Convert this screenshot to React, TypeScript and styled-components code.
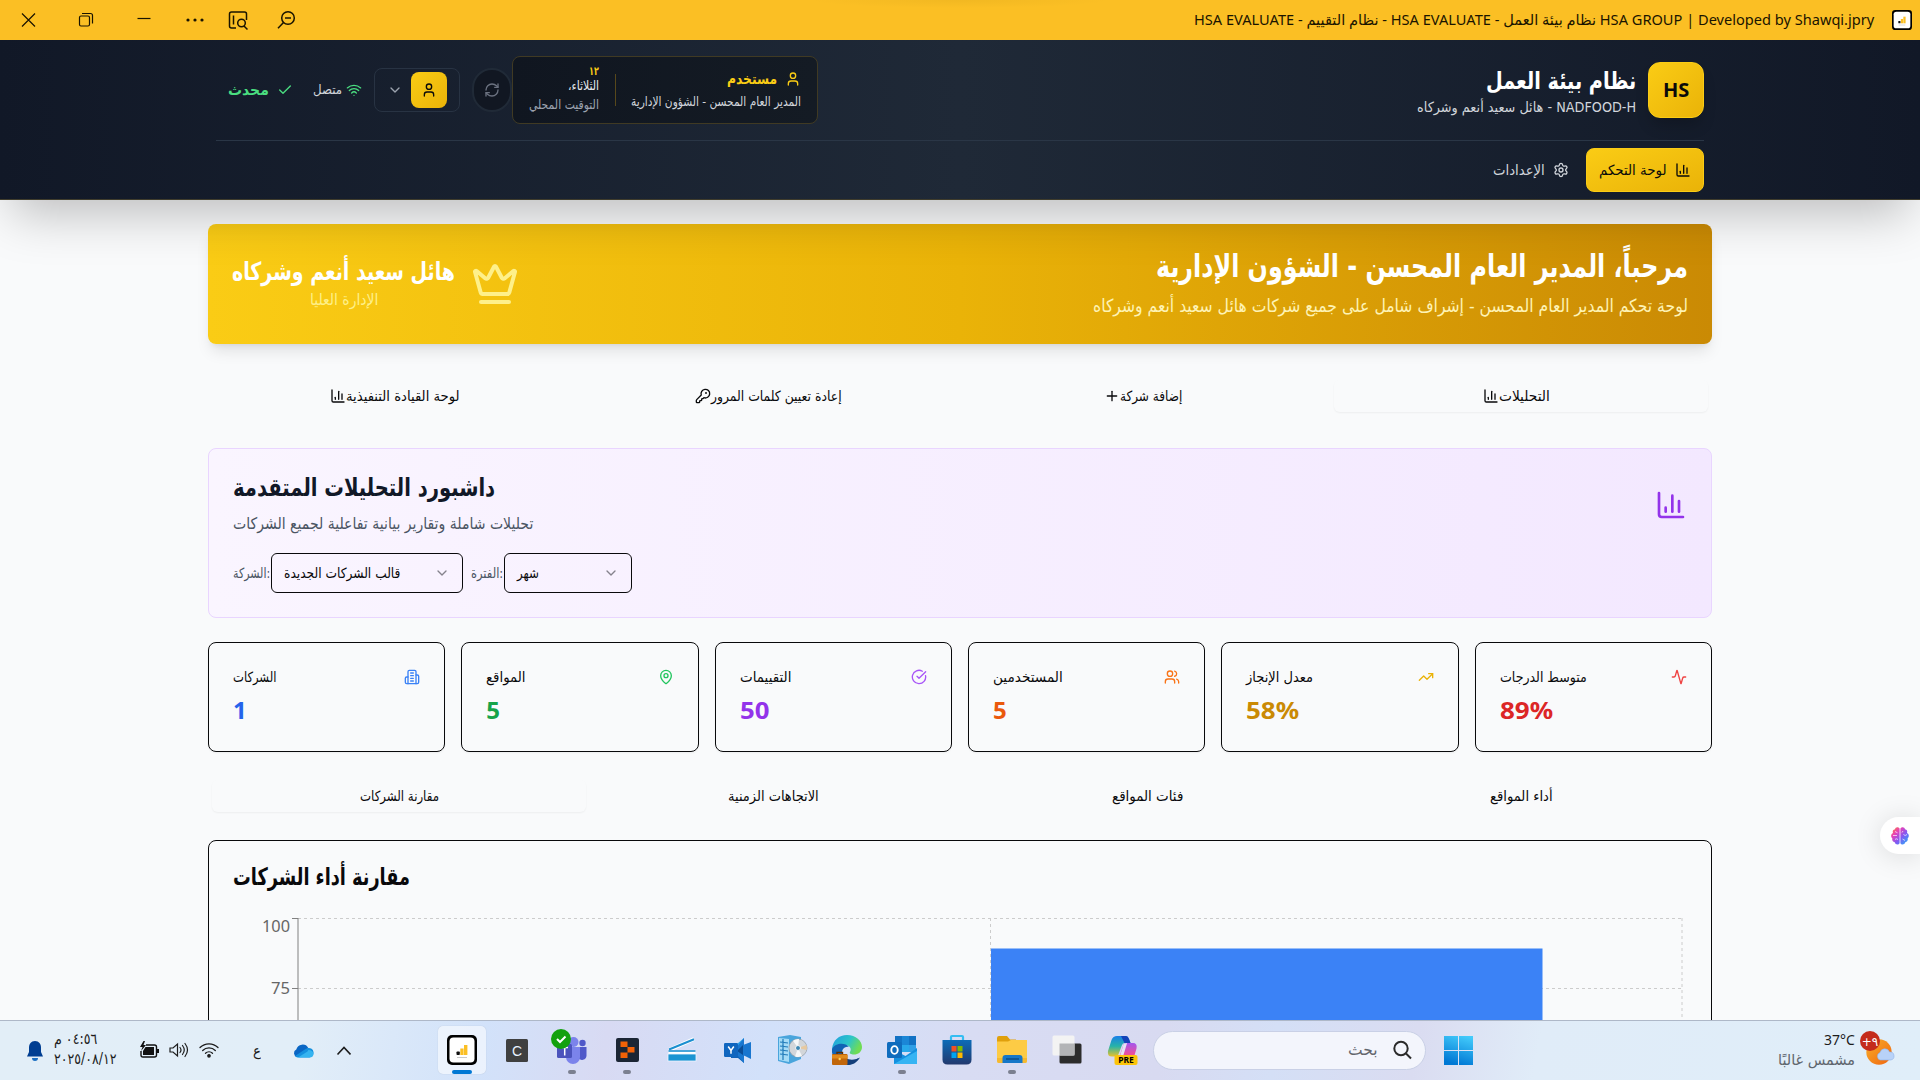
import React, { useLayoutEffect, useRef, useState } from "react";
import styled, { createGlobalStyle, css } from "styled-components";
import {
  Activity,
  ChartColumn,
  Check,
  ChevronDown,
  CircleCheckBig,
  Crown,
  KeyRound,
  MapPin,
  Plus,
  RefreshCw,
  Settings,
  TrendingUp,
  User,
  Users,
  Wifi,
} from "lucide-react";

const arabic = '"DejaVu Sans", "Noto Sans", sans-serif';
const latin = '"Noto Sans", "DejaVu Sans", sans-serif';

const Global = createGlobalStyle`
  * { box-sizing: border-box; }
  html, body { margin: 0; padding: 0; overflow: hidden; }
  body { font-family: ${arabic}; color: #09090b; background: #f9fafb; }
  svg { display: block; flex: none; }
`;

/* ---------- text that condenses to the width of its slot ---------- */

const Slot = styled.span<{ $w: number; $size: number; $bold?: boolean; $color?: string; $lh?: number; $latin?: boolean }>`
  display: block;
  flex: none;
  direction: ltr;
  text-align: left;
  white-space: nowrap;
  width: ${(p) => p.$w}px;
  font-family: ${(p) => (p.$latin ? latin : arabic)};
  font-size: ${(p) => p.$size}px;
  font-weight: ${(p) => (p.$bold ? 700 : 400)};
  line-height: ${(p) => p.$lh ?? Math.round(p.$size * 1.4)}px;
  height: ${(p) => p.$lh ?? Math.round(p.$size * 1.4)}px;
  ${(p) => p.$color && css`color: ${p.$color};`}
`;

const Run = styled.span`
  display: inline-block;
  transform-origin: 0 50%;
  vertical-align: top;
`;

type TProps = {
  w: number;
  size: number;
  children: string;
  bold?: boolean;
  color?: string;
  lh?: number;
  latin?: boolean;
  dir?: "rtl" | "ltr";
};

function T({ w, size, children, bold, color, lh, latin: isLatin, dir = "rtl" }: TProps) {
  const ref = useRef<HTMLSpanElement>(null);
  const [scale, setScale] = useState(1);
  useLayoutEffect(() => {
    if (ref.current) setScale(w / ref.current.offsetWidth);
  }, [w, size, children]);
  return (
    <Slot $w={w} $size={size} $bold={bold} $color={color} $lh={lh} $latin={isLatin}>
      <Run ref={ref} dir={dir} style={{ transform: `scaleX(${scale})` }}>
        {children}
      </Run>
    </Slot>
  );
}

/* ---------- window ---------- */

const Screen = styled.div`
  width: 1920px;
  height: 1080px;
  display: grid;
  grid-template-rows: 40px 980px 60px;
  overflow: hidden;
`;

const TitleBar = styled.div`
  display: flex;
  justify-content: space-between;
  align-items: center;
  padding: 0 8px 0 21px;
  background: radial-gradient(ellipse 150px 8px at 960px 0, rgba(120, 90, 0, 0.07), transparent) #fbbf24;
`;

const TitleGroup = styled.div`
  display: flex;
  align-items: center;
  gap: 18px;
`;

const TitleText = styled.div`
  padding-bottom: 2px;
`;

function WindowControls() {
  return (
    <svg width="280" height="24" viewBox="21 8 280 24" fill="none" stroke="#1a1400" strokeWidth="1.2">
      <path d="M22 13.500l13 13M35 13.500l-13 13" />
      <rect x="79.500" y="16" width="10" height="10" rx="1.500" />
      <path d="M82 13.500h8.500q2 0 2 2v8" />
      <path d="M137.500 18.500h13" />
      <g fill="#1a1400" stroke="none">
        <circle cx="188" cy="20" r="1.600" />
        <circle cx="195" cy="20" r="1.600" />
        <circle cx="202" cy="20" r="1.600" />
      </g>
      <path d="M236 28h-4.500q-2 0-2-2V14q0-2 2-2h13q2 0 2 2v6M233.500 15.500v9" strokeWidth="1.500" />
      <circle cx="241.500" cy="23" r="3.800" strokeWidth="1.500" />
      <path d="M244 26l3.500 3.500" strokeWidth="1.500" />
      <circle cx="288" cy="18" r="6.300" strokeWidth="1.500" />
      <path d="M283.500 22.500l-5.500 5.800M285 18h6" strokeWidth="1.500" />
    </svg>
  );
}

function EvaluateMark({ size }: { size: number }) {
  return (
    <svg width={size} height={size} viewBox="0 0 30 30">
      <rect width="30" height="30" rx="5" fill="#000" />
      <rect x="2.500" y="2.500" width="25" height="25" rx="4" fill="#fff" />
      <rect x="9.500" y="16.500" width="3.300" height="3.500" rx=".8" fill="#111" />
      <rect x="13.300" y="13.500" width="3.300" height="6.500" fill="#fbbf24" />
      <rect x="17" y="10" width="3.400" height="10" fill="#fbbf24" />
      <path d="M10 22.500h10" stroke="#bbb" strokeWidth=".8" />
    </svg>
  );
}

/* ---------- app ---------- */

const Viewport = styled.div`
  overflow: hidden;
  background: #f9fafb;
  display: flex;
  flex-direction: column;
`;

const Header = styled.header`
  position: relative;
  z-index: 2;
  flex: none;
  height: 160px;
  padding: 0 216px;
  background: linear-gradient(to right, #111827, #1f2937 50%, #111827);
  border-bottom: 1px solid #3f3c2c;
  box-shadow: 0 25px 50px -12px rgba(0, 0, 0, 0.25);
`;

const TopRow = styled.div`
  height: 101px;
  display: flex;
  align-items: center;
  justify-content: space-between;
  border-bottom: 1px solid #2a3646;
`;

const Cluster = styled.div<{ $gap?: number }>`
  display: flex;
  align-items: center;
  gap: ${(p) => p.$gap ?? 0}px;
`;

const StatusBar = styled(Cluster)`
  padding-left: 12px;
`;

const SyncIcon = styled.div`
  padding: 0 20px 0 8px;
`;

const MenuButton = styled.div`
  width: 86px;
  height: 44px;
  margin: 0 12px;
  padding: 0 12px;
  display: flex;
  align-items: center;
  justify-content: space-between;
  border: 1px solid #283343;
  border-radius: 8px;
  color: #9ca3af;
`;

const goldFill = css`
  background: linear-gradient(to bottom right, #facc15, #eab308);
  color: #0a0a0a;
`;

const Avatar = styled.div`
  ${goldFill}
  width: 36px;
  height: 36px;
  border-radius: 8px;
  display: grid;
  place-items: center;
`;

const Refresh = styled.div`
  width: 40px;
  height: 44px;
  border: 2px solid #202a37;
  border-radius: 20px;
  background: #111722;
  color: #6b7280;
  display: grid;
  place-items: center;
`;

const UserCard = styled.div`
  width: 306px;
  height: 68px;
  display: flex;
  align-items: center;
  padding: 0 16px;
  border: 1px solid #403a23;
  border-radius: 8px;
  background: linear-gradient(to right, #101620, #141b24);
`;

const DateColumn = styled.div`
  display: flex;
  flex-direction: column;
  align-items: flex-end;
  height: 47px;
`;

const CardRule = styled.div`
  width: 1px;
  height: 32px;
  margin: 0 15px 0 16px;
  background: #57481b;
`;

const UserColumn = styled.div`
  display: flex;
  flex-direction: column;
  align-items: flex-end;
  gap: 3px;
  padding-top: 1px;
  color: #facc15;
`;

const Brand = styled(Cluster)`
  gap: 12px;
`;

const BrandText = styled.div`
  display: flex;
  flex-direction: column;
  align-items: flex-end;
  padding-top: 3px;
`;

const BrandMark = styled.div`
  ${goldFill}
  width: 56px;
  height: 56px;
  border-radius: 12px;
  display: grid;
  place-items: center;
  border: 1px solid #facc15;
  box-shadow: 0 10px 15px -3px rgba(0, 0, 0, 0.2);
`;

const NavRow = styled.nav`
  height: 58px;
  display: flex;
  align-items: center;
  justify-content: flex-end;
  gap: 17px;
  color: #d1d5db;
`;

const NavItem = styled.div<{ $active?: boolean }>`
  height: 44px;
  display: flex;
  align-items: center;
  gap: 8px;
  ${(p) =>
    p.$active &&
    css`
      ${goldFill}
      width: 118px;
      padding-left: 12px;
      border: 1px solid #facc15;
      border-radius: 8px;
    `}
`;

const Main = styled.main`
  width: 1504px;
  margin: 0 auto;
  padding-top: 24px;
`;

const Banner = styled.section`
  height: 120px;
  padding: 0 24px;
  display: flex;
  justify-content: space-between;
  align-items: center;
  border-radius: 8px;
  background: linear-gradient(to left, #ca8a04, #eab308 50%, #facc15);
  box-shadow: 0 10px 15px -3px rgba(0, 0, 0, 0.1), 0 4px 6px -4px rgba(0, 0, 0, 0.1);
  color: #fff;
`;

const BannerColumn = styled.div<{ $end?: boolean }>`
  display: flex;
  flex-direction: column;
  align-items: ${(p) => (p.$end ? "flex-end" : "center")};
  padding-top: ${(p) => (p.$end ? 4 : 0)}px;
`;

const TabBar = styled.div<{ $top: number; $bottom: number }>`
  height: 40px;
  margin: ${(p) => p.$top}px 0 ${(p) => p.$bottom}px;
  padding: 4px;
  display: grid;
  grid-template-columns: repeat(4, 1fr);
`;

const Tab = styled.div<{ $active?: boolean; $icon?: boolean }>`
  display: flex;
  align-items: center;
  justify-content: center;
  padding-right: ${(p) => (p.$icon ? 9 : 0)}px;
  border-radius: 6px;
  box-shadow: ${(p) => (p.$active ? "0 1px 2px rgba(0,0,0,.05)" : "none")};
`;

const Panel = styled.section`
  height: 170px;
  padding: 21px 24px;
  display: flex;
  justify-content: space-between;
  border: 1px solid #e9d5ff;
  border-radius: 8px;
  background: linear-gradient(to right, #faf5ff, #f3e8ff);
`;

const PanelBody = styled.div`
  display: flex;
  flex-direction: column;
`;

const PanelIcon = styled.div`
  padding-top: 19px;
  color: #9333ea;
`;

const Filters = styled.div`
  display: flex;
  align-items: center;
  margin-top: 11px;
`;

const Select = styled.div<{ $w: number }>`
  width: ${(p) => p.$w}px;
  height: 40px;
  margin: 0 8px 0 1px;
  padding: 0 12px;
  display: flex;
  align-items: center;
  justify-content: space-between;
  border: 1px solid #09090b;
  border-radius: 6px;
  svg { color: #85828c; }
`;

const Stats = styled.section`
  margin-top: 24px;
  display: grid;
  grid-template-columns: repeat(6, 1fr);
  gap: 16px;
`;

const StatCard = styled.div`
  height: 110px;
  padding: 23px 24px 0;
  border: 1px solid #09090b;
  border-radius: 8px;
  box-shadow: 0 1px 2px rgba(0, 0, 0, 0.05);
`;

const StatHead = styled.div<{ $icon: string }>`
  display: flex;
  align-items: center;
  justify-content: space-between;
  height: 22px;
  margin-bottom: 6px;
  svg { color: ${(p) => p.$icon}; }
`;

const ChartCard = styled.section`
  height: 260px;
  border: 1px solid #09090b;
  border-radius: 8px;
`;

const ChartHead = styled.div`
  height: 54px;
  padding: 20px 24px 0;
`;

const Assistant = styled.div`
  position: absolute;
  right: 0;
  top: 817px;
  z-index: 3;
  width: 40px;
  height: 37px;
  padding-left: 10px;
  display: flex;
  align-items: center;
  border-radius: 19px 0 0 19px;
  background: #fff;
  box-shadow: 0 2px 28px rgba(0, 0, 0, 0.13);
`;

function Building({ size }: { size: number }) {
  return (
    <svg width={size} height={size} viewBox="0 0 24 24" fill="none" stroke="currentColor" strokeWidth="2" strokeLinecap="round" strokeLinejoin="round">
      <path d="M6 22V4a2 2 0 0 1 2-2h8a2 2 0 0 1 2 2v18Z" />
      <path d="M6 12H4a2 2 0 0 0-2 2v6a2 2 0 0 0 2 2h2" />
      <path d="M18 9h2a2 2 0 0 1 2 2v9a2 2 0 0 1-2 2h-2" />
      <path d="M10 6h4M10 10h4M10 14h4M10 18h4" />
    </svg>
  );
}

const stats = [
  { label: "الشركات", w: 43, value: "1", vw: 14, icon: Building, tint: "#3b82f6", color: "#2563eb" },
  { label: "المواقع", w: 40, value: "5", vw: 14, icon: MapPin, tint: "#22c55e", color: "#16a34a" },
  { label: "التقييمات", w: 51, value: "50", vw: 29, icon: CircleCheckBig, tint: "#a855f7", color: "#9333ea" },
  { label: "المستخدمين", w: 70, value: "5", vw: 14, icon: Users, tint: "#f97316", color: "#ea580c" },
  { label: "معدل الإنجاز", w: 67, value: "58%", vw: 53, icon: TrendingUp, tint: "#eab308", color: "#ca8a04" },
  { label: "متوسط الدرجات", w: 87, value: "89%", vw: 53, icon: Activity, tint: "#ef4444", color: "#dc2626" },
];

const sections = [
  { label: "لوحة القيادة التنفيذية", w: 114, icon: ChartColumn },
  { label: "إعادة تعيين كلمات المرور", w: 131, icon: KeyRound },
  { label: "إضافة شركة", w: 62, icon: Plus },
  { label: "التحليلات", w: 51, icon: ChartColumn },
];

const views = [
  { label: "مقارنة الشركات", w: 79 },
  { label: "الاتجاهات الزمنية", w: 91 },
  { label: "فئات المواقع", w: 71 },
  { label: "أداء المواقع", w: 63 },
];

function AppHeader() {
  return (
    <Header>
      <TopRow>
        <StatusBar>
          <T w={41} size={15} bold color="#4ade80">محدث</T>
          <SyncIcon>
            <Check size={16} color="#4ade80" />
          </SyncIcon>
          <Cluster $gap={4}>
            <T w={29} size={13} color="#d1d5db">متصل</T>
            <Wifi size={16} color="#4ade80" />
          </Cluster>
          <MenuButton>
            <ChevronDown size={16} />
            <Avatar>
              <User size={16} />
            </Avatar>
          </MenuButton>
          <Refresh>
            <RefreshCw size={16} />
          </Refresh>
          <UserCard>
            <DateColumn>
              <T w={10} size={12} bold lh={8} color="#facc15">١٢</T>
              <T w={31} size={13} lh={22} color="#e5e7eb">الثلاثاء،</T>
              <T w={70} size={13} lh={16} color="#9ca3af">التوقيت المحلي</T>
            </DateColumn>
            <CardRule />
            <UserColumn>
              <Cluster $gap={8}>
                <T w={50} size={15} lh={20} bold>مستخدم</T>
                <User size={16} />
              </Cluster>
              <T w={170} size={13} lh={20} color="#d1d5db">المدير العام المحسن - الشؤون الإدارية</T>
            </UserColumn>
          </UserCard>
        </StatusBar>
        <Brand>
          <BrandText>
            <T w={150} size={24} lh={30} bold color="#fff">نظام بيئة العمل</T>
            <T w={219} size={14} lh={22} color="#d1d5db">NADFOOD-H - هائل سعيد أنعم وشركاه</T>
          </BrandText>
          <BrandMark>
            <T w={26} size={20} bold latin dir="ltr">HS</T>
          </BrandMark>
        </Brand>
      </TopRow>
      <NavRow>
        <NavItem>
          <T w={52} size={14}>الإعدادات</T>
          <Settings size={16} />
        </NavItem>
        <NavItem $active>
          <T w={68} size={14}>لوحة التحكم</T>
          <ChartColumn size={16} />
        </NavItem>
      </NavRow>
    </Header>
  );
}

function ComparisonChart() {
  return (
    <svg width="1502" height="180" viewBox="0 0 1502 180">
      <path d="M89 23.500H1473M89 93.500H1473M781.500 23V180M1473 23V180" fill="none" stroke="#ccc" strokeDasharray="3 3" />
      <rect x="782" y="53.500" width="551.500" height="140" fill="#3b82f6" />
      <path d="M89 23V180M83 23.500h6M83 93.500h6" stroke="#808080" fill="none" />
      <g fill="#666" fontFamily={latin} fontSize="16" textAnchor="end">
        <text x="81" y="36.500" textLength="28" lengthAdjust="spacingAndGlyphs">100</text>
        <text x="81" y="99" textLength="19" lengthAdjust="spacingAndGlyphs">75</text>
      </g>
    </svg>
  );
}

function BrainIcon() {
  return (
    <svg width="20" height="20" viewBox="0 0 20 20">
      <defs>
        <linearGradient id="brain" x1="0" y1="0" x2="1" y2="1">
          <stop offset="0" stopColor="#ff8a1f" />
          <stop offset=".3" stopColor="#e83fb8" />
          <stop offset=".6" stopColor="#7c5cf5" />
          <stop offset="1" stopColor="#22b8f5" />
        </linearGradient>
      </defs>
      <path
        d="M9.600 2.500C8 .3 5.200 1.200 5 3.300 3 3.500 2.300 5.500 3 7 .8 7.800.6 11 2.300 12.300 1.800 14.500 3 16 4.700 16.300 5.500 19 8.500 19.200 9.600 17.300zM10.400 2.500C12 .3 14.800 1.200 15 3.300 17 3.500 17.700 5.500 17 7c2.200.8 2.400 4 .7 5.300.5 2.200-.7 3.700-2.400 4-.8 2.700-3.800 2.900-4.900 1z"
        fill="url(#brain)"
      />
      <path d="M3 9.500h4M5 5.500l2.500 1.300M5 13.500q1-1.500 3 0M17 8.500q-2 2-3.500 0M13 5l-1 1.500M12.500 13l2.500 1.500" stroke="#fff" strokeOpacity=".75" strokeWidth=".9" fill="none" />
    </svg>
  );
}

function Dashboard() {
  return (
    <Main>
      <Banner>
        <Cluster $gap={16}>
          <BannerColumn>
            <T w={223} size={25} lh={32} bold>هائل سعيد أنعم وشركاه</T>
            <T w={68} size={16} lh={24} color="#fef08a">الإدارة العليا</T>
          </BannerColumn>
          <Crown size={48} color="#fef08a" />
        </Cluster>
        <BannerColumn $end>
          <T w={532} size={31} lh={40} bold>مرحباً، المدير العام المحسن - الشؤون الإدارية</T>
          <T w={595} size={18} lh={40} color="#fef3b5">لوحة تحكم المدير العام المحسن - إشراف شامل على جميع شركات هائل سعيد أنعم وشركاه</T>
        </BannerColumn>
      </Banner>

      <TabBar $top={32} $bottom={32}>
        {sections.map(({ label, w, icon: Icon }, i) => (
          <Tab key={label} $icon $active={i === 3}>
            <Icon size={16} />
            <T w={w} size={14}>{label}</T>
          </Tab>
        ))}
      </TabBar>

      <Panel>
        <PanelBody>
          <T w={262} size={25} lh={36} bold color="#111827">داشبورد التحليلات المتقدمة</T>
          <T w={300} size={16} lh={36} color="#4b5563">تحليلات شاملة وتقارير بيانية تفاعلية لجميع الشركات</T>
          <Filters>
            <T w={37} size={14} color="#4b5563" dir="ltr">الشركة:</T>
            <Select $w={192}>
              <T w={116} size={14}>قالب الشركات الجديدة</T>
              <ChevronDown size={16} />
            </Select>
            <T w={32} size={14} color="#4b5563" dir="ltr">الفترة:</T>
            <Select $w={128}>
              <T w={22} size={14}>شهر</T>
              <ChevronDown size={16} />
            </Select>
          </Filters>
        </PanelBody>
        <PanelIcon>
          <ChartColumn size={32} />
        </PanelIcon>
      </Panel>

      <Stats>
        {stats.map(({ label, w, value, vw, icon: Icon, tint, color }) => (
          <StatCard key={label}>
            <StatHead $icon={tint}>
              <T w={w} size={14}>{label}</T>
              <Icon size={16} />
            </StatHead>
            <T w={vw} size={24} lh={32} bold latin dir="ltr" color={color}>{value}</T>
          </StatCard>
        ))}
      </Stats>

      <TabBar $top={24} $bottom={24}>
        {views.map(({ label, w }, i) => (
          <Tab key={label} $active={i === 0}>
            <T w={w} size={14}>{label}</T>
          </Tab>
        ))}
      </TabBar>

      <ChartCard>
        <ChartHead>
          <T w={177} size={24} lh={32} bold>مقارنة أداء الشركات</T>
        </ChartHead>
        <ComparisonChart />
      </ChartCard>
    </Main>
  );
}

/* ---------- taskbar ---------- */

const Taskbar = styled.footer`
  position: relative;
  z-index: 4;
  display: grid;
  grid-template-columns: 434px 715px 1fr auto;
  align-items: center;
  border-top: 1px solid #aeb8c8;
  background: linear-gradient(100deg, #e2eef7 0, #e2eef8 300px, #d2e2fa 480px, #d8daf3 600px, #d2e1fa 760px, #d8dcf3 960px, #d8daf1 1150px, #d4dff6 1260px, #dadcf1 1400px, #e0ecf8 1520px, #e0eef9 100%);
`;

const Tray = styled.div`
  display: flex;
  align-items: center;
  padding-left: 26px;
`;

const Clock = styled.div`
  display: flex;
  flex-direction: column;
  margin: 0 22px 0 10px;
  padding-bottom: 2px;
`;

const TrayIcons = styled.div`
  display: flex;
  gap: 10px;
  padding-bottom: 2px;
`;

const Letter = styled.div`
  margin: 0 32px 0 34px;
`;

const Apps = styled.div`
  display: flex;
`;

const AppSlot = styled.div<{ $active?: boolean }>`
  width: 55px;
  height: 59px;
  padding: 5px 3.5px 6px;
  > div {
    height: 48px;
    border-radius: 5px;
    display: flex;
    flex-direction: column;
    align-items: center;
    justify-content: space-between;
    padding-top: 8px;
    ${(p) => p.$active && css`background: rgba(255, 255, 255, 0.55); box-shadow: 0 0 1px rgba(0, 0, 0, 0.2);`}
  }
`;

const Indicator = styled.i<{ $kind: "none" | "dot" | "bar" }>`
  display: block;
  height: 4px;
  border-radius: 2px;
  width: ${(p) => (p.$kind === "bar" ? 20 : 8)}px;
  background: ${(p) => (p.$kind === "bar" ? "#0078d4" : p.$kind === "dot" ? "#7b8090" : "transparent")};
`;

const SearchGroup = styled.div`
  display: flex;
  align-items: center;
  gap: 18px;
  padding: 0 0 1px 4px;
`;

const SearchBox = styled.div`
  width: 273px;
  height: 39px;
  display: flex;
  align-items: center;
  justify-content: flex-end;
  gap: 14px;
  padding-right: 13px;
  border: 1px solid #c9d0e6;
  border-radius: 20px;
  background: #f3f5fc;
`;

const Weather = styled.div`
  display: flex;
  align-items: center;
  gap: 5px;
  padding: 0 24px 2px 0;
`;

const WeatherText = styled.div`
  display: flex;
  flex-direction: column;
  align-items: flex-end;
`;

const glyph = { width: 32, height: 32, viewBox: "0 0 32 32" };

const apps: { id: string; mark: React.ReactNode; state: "none" | "dot" | "bar" }[] = [
  { id: "evaluate", state: "bar", mark: <svg {...glyph}><svg x="1" y="1"><EvaluateMark size={30} /></svg></svg> },
  {
    id: "console",
    state: "none",
    mark: (
      <svg {...glyph}>
        <rect x="5" y="5" width="22" height="23" rx="1.500" fill="#3f4040" />
        <text x="16" y="21.500" fontSize="14" fill="#e8f2ff" textAnchor="middle" fontFamily="Liberation Sans">C</text>
      </svg>
    ),
  },
  {
    id: "teams",
    state: "dot",
    mark: (
      <svg {...glyph} overflow="visible">
        <circle cx="26.500" cy="9" r="3.200" fill="#5059c9" />
        <circle cx="17.500" cy="8" r="5" fill="#7b83eb" />
        <path d="M22 13h8.500v8.500a4.500 4.500 0 0 1-8.500 2z" fill="#5059c9" />
        <path d="M10 13h14v10a7 7 0 0 1-14 0z" fill="#7b83eb" />
        <rect x="1" y="10" width="15" height="14" rx="1.500" fill="#4b53bc" />
        <path d="M5.500 13.500h6.500M8.700 13.500v8" stroke="#fff" strokeWidth="1.500" />
        <circle cx="5" cy="5" r="10" fill="#13a10e" />
        <path d="M1 5l3 3 5.500-5.500" fill="none" stroke="#fff" strokeWidth="2" />
      </svg>
    ),
  },
  {
    id: "replit",
    state: "dot",
    mark: (
      <svg {...glyph}>
        <rect x="5" y="4" width="23" height="24" rx="2" fill="#1b2534" />
        <path d="M9.500 7.500h7V13h-7zM16.500 13h7v5.500h-7zM9.500 18.500h7V24h-7z" fill="#f26207" />
      </svg>
    ),
  },
  {
    id: "scanner",
    state: "none",
    mark: (
      <svg {...glyph}>
        <path d="M3 16L28 5M2.500 18h27" stroke="#fff" strokeWidth="4" />
        <path d="M3 15.500L28 5.300" stroke="#1b8fd0" strokeWidth="2" />
        <path d="M2.500 17h27" stroke="#1b8fd0" strokeWidth="1.600" />
        <rect x="2" y="20" width="28" height="7" fill="#1b94d2" stroke="#eef6ff" strokeWidth=".8" />
      </svg>
    ),
  },
  {
    id: "yammer",
    state: "none",
    mark: (
      <svg {...glyph}>
        <path d="M9 10h7l7-6v11z" fill="#2ba3ea" />
        <path d="M10 15h13v14l-6-5h-7z" fill="#0f62b8" />
        <path d="M15 14l8-10v25l-7-8zM22 11l8-3v17l-8-4z" fill="#1976cf" />
        <path d="M16 17l6-6v10z" fill="#0a4c96" />
        <rect x="3" y="9" width="14" height="14" rx="1.200" fill="#1066bf" />
        <path d="M7.200 12.500l2.800 4 2.800-4M10 16.500v3.300" stroke="#fff" strokeWidth="1.500" fill="none" />
      </svg>
    ),
  },
  {
    id: "installer",
    state: "none",
    mark: (
      <svg {...glyph}>
        <path d="M2 3l12-2 11 2v22l-12 5-11-3z" fill="#4aa5dc" />
        <path d="M3 4l10 1v23l-10-2z" fill="#a5dbf6" />
        <path d="M4 8l8 1M4 12l8 1M4 16l8 1M4 20l8 1M7 5v21" stroke="#1f79b8" strokeWidth="1.200" />
        <circle cx="22" cy="14" r="9" fill="#d2d6da" stroke="#9ba3ab" strokeWidth=".8" />
        <path d="M22 14l-5-7.300a9 9 0 0 1 6-1.600zM22 14l4 8a9 9 0 0 1-7 .4z" fill="#f6f8f9" />
        <path d="M22 14l8.500-3a9 9 0 0 1 .2 5z" fill="#e7c9a0" />
        <circle cx="22" cy="14" r="2.500" fill="#3c87b4" stroke="#f5f5f5" />
      </svg>
    ),
  },
  {
    id: "edge",
    state: "none",
    mark: (
      <svg {...glyph}>
        <defs>
          <linearGradient id="edgeTop" x1="0" y1="0" x2="1" y2=".4">
            <stop offset="0" stopColor="#1f9de0" />
            <stop offset=".6" stopColor="#2cc5c9" />
            <stop offset="1" stopColor="#6fdc55" />
          </linearGradient>
        </defs>
        <path d="M1 15C2 6 8 1 16 1c9 0 15 6 15 12 0 5-4 7.500-8 7.500-3 0-5-1-4-2.500 2-3 0-7-5-7-6 0-9 2-13 4z" fill="url(#edgeTop)" />
        <path d="M1 15c3-6 13-7 17-2-5-1-8 3-6.500 8 1.500 5 8 8 16 3-3 4.500-7 7-12 7C7 31 0 24 1 15z" fill="#1163b4" />
        <path d="M11.500 20c2 5 9 8 17.500 3.500-3 5-7 7.500-13 7.500z" fill="#143f7a" />
        <rect x="1" y="20" width="15.500" height="11" rx="1" fill="#c1660a" />
        <path d="M1 21h15.500v3.500H1z" fill="#e08a1b" />
        <path d="M6 20v-1.500h5.500V20" stroke="#5a2e05" strokeWidth="1.400" fill="none" />
        <circle cx="8.700" cy="25" r="1.200" fill="#ffd25c" />
      </svg>
    ),
  },
  {
    id: "outlook",
    state: "dot",
    mark: (
      <svg {...glyph}>
        <path d="M9 2h21v16H9z" fill="#1066b5" />
        <path d="M9 2h7v9H9zM23 2h7v9h-7z" fill="#1272c4" />
        <path d="M16 2h7v9h-7z" fill="#1b86d6" />
        <path d="M16 11h7v7h-7z" fill="#28a8ea" />
        <path d="M23 11h7v7h-7z" fill="#2f9fe6" />
        <path d="M8 16l11.500 6L31 14v16H8z" fill="#1490df" />
        <path d="M8 30l23-13v13z" fill="#36b4f3" />
        <rect x="1" y="8" width="15" height="16" rx="1.500" fill="#0f6cbd" />
        <ellipse cx="8.500" cy="16" rx="3.200" ry="3.900" fill="none" stroke="#fff" strokeWidth="1.900" />
      </svg>
    ),
  },
  {
    id: "store",
    state: "none",
    mark: (
      <svg {...glyph}>
        <defs>
          <linearGradient id="bag" x1="0" y1="0" x2="0" y2="1">
            <stop offset="0" stopColor="#0c6cb8" />
            <stop offset="1" stopColor="#22396e" />
          </linearGradient>
        </defs>
        <path d="M10 7V3q0-1 1-1h10q1 0 1 1v4" fill="none" stroke="#34bdf2" strokeWidth="2.200" />
        <path d="M1.500 6h29v19.500q0 5-5 5h-19q-5 0-5-5z" fill="url(#bag)" />
        <path d="M10.500 12h5v5.500h-5z" fill="#f25022" />
        <path d="M16.500 12h5v5.500h-5z" fill="#7fba00" />
        <path d="M10.500 18.500h5V24h-5z" fill="#00a4ef" />
        <path d="M16.500 18.500h5V24h-5z" fill="#ffb900" />
      </svg>
    ),
  },
  {
    id: "files",
    state: "dot",
    mark: (
      <svg {...glyph}>
        <path d="M1 4q0-2 2-2h8l3 3.500h6V12H1z" fill="#e0a00c" />
        <path d="M1 7.500h11L15 6h16v21q0 2-2 2H3q-2 0-2-2z" fill="#fdcb45" />
        <path d="M1 24h30v3q0 2-2 2H3q-2 0-2-2z" fill="#f6b92f" />
        <path d="M6.500 29v-5q0-3 3-3h14q3 0 3 3v5z" fill="#1677c8" />
        <path d="M10 25h13" stroke="#0a4c8a" strokeWidth="1.500" />
      </svg>
    ),
  },
  {
    id: "taskview",
    state: "none",
    mark: (
      <svg {...glyph}>
        <rect x="8.500" y="9.500" width="22" height="20" rx="1.500" fill="#2c2c2c" />
        <rect x="1.500" y="1.500" width="22" height="20" rx="1.500" fill="#f3f3f3" />
        <path d="M8.500 9.500h15v12h-15z" fill="#b3b4b6" />
      </svg>
    ),
  },
  {
    id: "copilot",
    state: "none",
    mark: (
      <svg {...glyph}>
        <defs>
          <linearGradient id="copA" x1="0" y1="0" x2="0" y2="1">
            <stop offset="0" stopColor="#1a7fe8" />
            <stop offset=".5" stopColor="#27b3a8" />
            <stop offset="1" stopColor="#e9c22c" />
          </linearGradient>
          <linearGradient id="copB" x1="0" y1="0" x2="0" y2="1">
            <stop offset="0" stopColor="#a257ee" />
            <stop offset=".6" stopColor="#ee4f9b" />
            <stop offset="1" stopColor="#f58a52" />
          </linearGradient>
        </defs>
        <path d="M11 2h9q2 0 3 3l1.500 4h-6q-2 0-2.700 2.500L13 19q-1 3.500-4 3.500H6Q1 22.500 2 17L5.500 6Q7 2 11 2z" fill="url(#copA)" />
        <path d="M15 2h5q2 0 3 3l1.500 4h-6z" fill="#1443b8" />
        <path d="M24.500 9H27q4.500 0 3.500 5.500L28 23q-1.500 5-6 5H13q-2 0-2.500-3.500 2.500 0 3.500-3.500l3-9q.8-3 3.500-3z" fill="url(#copB)" />
        <path d="M17.300 11l-3 10h3.200l3.600-12q-3 0-3.800 2z" fill="#e6e3f5" />
        <rect x="8.500" y="21" width="23" height="10" rx="2" fill="#fcc40a" />
        <text x="20" y="29" fontSize="8.500" fontWeight="700" textAnchor="middle" fontFamily="Noto Sans">PRE</text>
      </svg>
    ),
  },
];

function TaskbarView() {
  return (
    <Taskbar>
      <Tray>
        <svg width="18" height="22" viewBox="0 0 18 22" fill="#003e92">
          <path d="M9 1c4 0 6 3 6 6.500V12l2 4.500H1L3 12V7.500C3 4 5 1 9 1z" />
          <path d="M6 18h6a3 3 0 0 1-6 0z" fill="#1b6ec2" />
        </svg>
        <Clock>
          <T w={43} size={15} lh={19} color="#1c1c1c">٠٤:٥٦ م</T>
          <T w={63} size={15} lh={20} color="#1c1c1c">٢٠٢٥/٠٨/١٢</T>
        </Clock>
        <TrayIcons>
          <svg width="20" height="20" viewBox="0 0 20 20">
            <path d="M7 5h8.500q2 0 2 2v8q0 2-2 2H4q-2 0-2-2v-4" fill="none" stroke="#111" strokeWidth="1.400" />
            <path d="M6.500 7h8.500v8H4v-4z" fill="#111" />
            <path d="M18 9h2v4h-2z" fill="#111" />
            <path d="M4.500 1L1 7h2.500L2 11l5-6H4.500L6 1z" fill="#111" />
          </svg>
          <svg width="20" height="20" viewBox="0 0 20 20" fill="none" stroke="#1c1c1c" strokeWidth="1.200" strokeLinecap="round">
            <path d="M1 8v4h3l4.500 4V4L4 8zM11 7.500q2 2.500 0 5M13.500 5.500q3.500 4.500 0 9M16 3.500q5 6.500 0 13" />
          </svg>
          <svg width="20" height="20" viewBox="0 0 20 20" fill="none" stroke="#1c1c1c" strokeWidth="1.300" strokeLinecap="round">
            <path d="M1 7.500a12.800 12.800 0 0 1 18 0M3.700 10.500a9 9 0 0 1 12.600 0M6.500 13.300a5 5 0 0 1 7 0" />
            <circle cx="10" cy="15.800" r="1.200" fill="#1c1c1c" />
          </svg>
        </TrayIcons>
        <Letter>
          <T w={8} size={15} lh={28} color="#1c1c1c">ع</T>
        </Letter>
        <svg width="21" height="14" viewBox="0 0 21 14">
          <path d="M4 13a4 4 0 0 1-.7-7.500 6.500 6.500 0 0 1 12-1.500L10 9z" fill="#0a66c4" />
          <path d="M15 4a4.800 4.800 0 0 1 1.500 9.500H4.500A4 4 0 0 1 2 12l9-6q2-1.500 4-2z" fill="#1490df" />
          <path d="M15.300 6q5 .3 5.200 4-.3 3.500-4 3.500H5l9.500-6z" fill="#35b4f0" />
        </svg>
        <svg width="37" height="10" viewBox="0 0 37 10">
          <path d="M23.500 8.500l6.500-7 6.500 7" fill="none" stroke="#1c1c1c" strokeWidth="1.600" />
        </svg>
      </Tray>
      <Apps>
        {apps.map(({ id, mark, state }) => (
          <AppSlot key={id} $active={state === "bar"}>
            <div>
              {mark}
              <Indicator $kind={state} />
            </div>
          </AppSlot>
        ))}
      </Apps>
      <SearchGroup>
        <SearchBox>
          <T w={30} size={16} lh={26} color="#62656c">بحث</T>
          <svg width="20" height="20" viewBox="0 0 20 20" fill="none" stroke="#2a2a2a" strokeWidth="2">
            <circle cx="9" cy="8.500" r="6.700" />
            <path d="M14 13.500l5 5" />
          </svg>
        </SearchBox>
        <svg width="29" height="29" viewBox="0 0 29 29">
          <defs>
            <linearGradient id="win" x1="0.800" y1="0" x2="0.500" y2="1">
              <stop offset="0" stopColor="#43cbfb" />
              <stop offset="1" stopColor="#0078d4" />
            </linearGradient>
          </defs>
          <path d="M0 0h14v14H0zM15 0h14v14H15zM0 15h14v14H0zM15 15h14v14H15z" fill="url(#win)" />
        </svg>
      </SearchGroup>
      <Weather>
        <WeatherText>
          <T w={31} size={14} lh={20} latin dir="ltr" color="#1c1c1c">37°C</T>
          <T w={77} size={15} lh={20} color="#5f666e">مشمس غالبًا</T>
        </WeatherText>
        <svg width="36" height="38" viewBox="0 0 36 38">
          <defs>
            <linearGradient id="sun" x1="0" y1="0" x2="1" y2="1">
              <stop offset="0" stopColor="#f8b02a" />
              <stop offset="1" stopColor="#f0640f" />
            </linearGradient>
          </defs>
          <circle cx="19" cy="21" r="12.700" fill="url(#sun)" />
          <path d="M20 29a4 4 0 0 1 0-7.500 5 5 0 0 1 9.500-.5 4 4 0 0 1 1 8z" fill="#b8d2f8" stroke="#8fb2ea" strokeWidth=".6" />
          <circle cx="10" cy="10" r="10" fill="#c42b1c" />
          <text x="10" y="14.500" fontSize="12" fill="#fff" textAnchor="middle" fontFamily={arabic} direction="ltr">+٩</text>
        </svg>
      </Weather>
    </Taskbar>
  );
}

export default function App() {
  return (
    <Screen>
      <Global />
      <TitleBar>
        <WindowControls />
        <TitleGroup>
          <TitleText>
            <T w={680} size={15} lh={24} latin dir="ltr" color="#1a1400">
              HSA EVALUATE - نظام التقييم - HSA EVALUATE - نظام بيئة العمل HSA GROUP | Developed by Shawqi.jpry
            </T>
          </TitleText>
          <EvaluateMark size={20} />
        </TitleGroup>
      </TitleBar>
      <Viewport>
        <AppHeader />
        <Dashboard />
      </Viewport>
      <Assistant>
        <BrainIcon />
      </Assistant>
      <TaskbarView />
    </Screen>
  );
}
